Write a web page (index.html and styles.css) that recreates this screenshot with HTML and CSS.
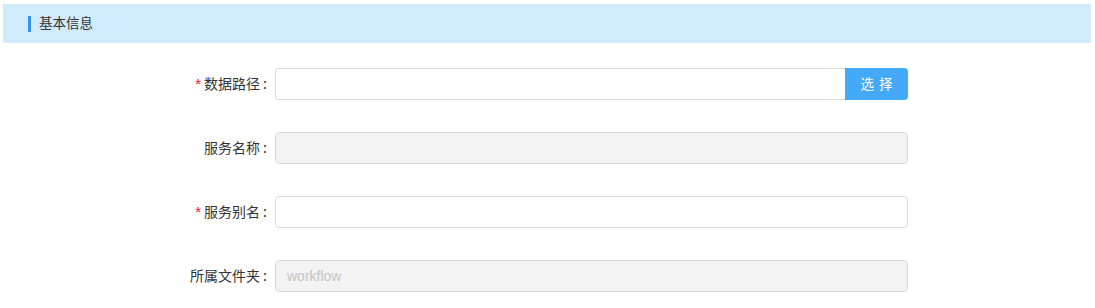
FILE: index.html
```html
<!DOCTYPE html>
<html>
<head>
<meta charset="utf-8">
<link rel="stylesheet" href="styles.css">
</head>
<body>
<div class="page">
  <div class="section-head"><span class="marker"></span><span class="title">基本信息</span></div>
  <div class="form">
    <div class="row">
      <label class="label"><span class="req">*</span>数据路径 :</label>
      <div class="field group">
        <div class="input"></div>
        <button class="btn">选 择</button>
      </div>
    </div>
    <div class="row">
      <label class="label">服务名称 :</label>
      <div class="field"><div class="input disabled"></div></div>
    </div>
    <div class="row">
      <label class="label"><span class="req">*</span>服务别名 :</label>
      <div class="field"><div class="input"></div></div>
    </div>
    <div class="row">
      <label class="label">所属文件夹 :</label>
      <div class="field"><div class="input disabled"><span class="val">workflow</span></div></div>
    </div>
  </div>
</div>
</body>
</html>
```
FILE: styles.css
```css
* { box-sizing: border-box; }
html, body { margin: 0; padding: 0; background: #fff; }
body { font-family: "Noto Sans CJK SC", "Noto Sans", sans-serif; color: #333; font-size: 14px; }
.page { padding: 4px 4px 0 3px; }
.section-head {
  height: 39px;
  background: #d1ebfe;
  display: flex;
  align-items: center;
  padding-left: 25px;
}
.marker { width: 3px; height: 16px; background: #2d96f0; margin-right: 8px; }
.title { font-size: 13.5px; color: #333; line-height: 1; margin-top: -2px; }
.form { padding-top: 25px; display: flex; flex-direction: column; gap: 32px; }
.row { display: flex; align-items: center; height: 32px; }
.label {
  width: 272px;
  padding-right: 8px;
  padding-bottom: 3px;
  text-align: right;
  font-size: 14px;
  color: #333;
  white-space: nowrap;
}
.req { color: #e0202a; margin-right: 3px; font-family: "Liberation Sans", sans-serif; font-size: 15px; }
.field { width: 633px; display: flex; }
.input {
  flex: 1;
  height: 32px;
  border: 1px solid #d9d9d9;
  border-radius: 4px;
  background: #fff;
  display: flex;
  align-items: center;
  padding-left: 11px;
}
.group .input { border-top-right-radius: 0; border-bottom-right-radius: 0; border-right: none; }
.input.disabled { background: #f3f3f3; }
.val { font-family: "Liberation Sans", Arial, sans-serif; font-size: 14px; color: #c4c4c4; }
.btn {
  width: 63px;
  height: 32px;
  border: none;
  background: #45a9f9;
  color: #fff;
  border-radius: 0 4px 4px 0;
  font-family: "Noto Sans CJK SC", sans-serif;
  font-size: 13.5px;
  letter-spacing: 1px;
  padding: 0 0 2px 1px;
}
```
